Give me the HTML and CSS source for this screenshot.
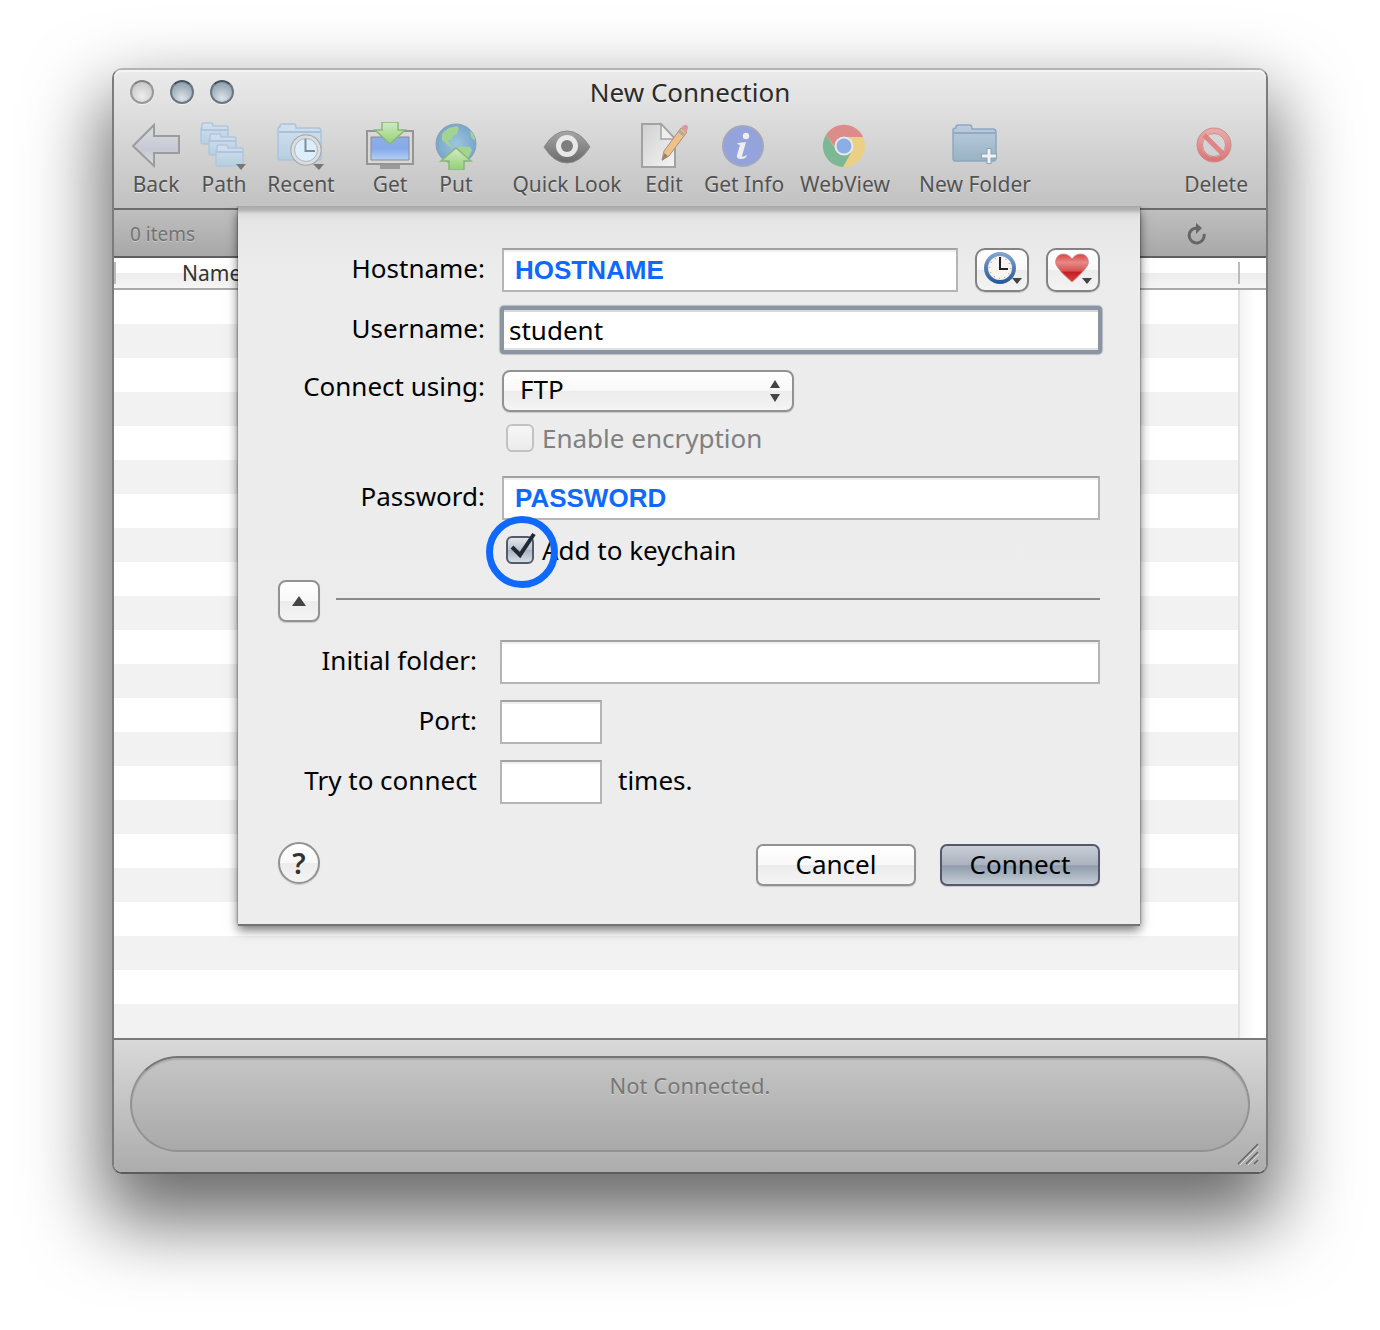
FILE: index.html
```html
<!DOCTYPE html>
<html lang="en">
<head>
<meta charset="utf-8">
<title>New Connection</title>
<link rel="stylesheet" href="styles.css">
</head>
<body>
<svg class="defs" width="0" height="0" aria-hidden="true">
  <defs>
    <linearGradient id="folder" x1="0" y1="0" x2="0" y2="1"><stop offset="0" stop-color="#d3e0ee"/><stop offset="1" stop-color="#b5cfdf"/></linearGradient>
    <linearGradient id="folderDark" x1="0" y1="0" x2="0" y2="1"><stop offset="0" stop-color="#bccddd"/><stop offset="1" stop-color="#98b2c4"/></linearGradient>
    <linearGradient id="arrow" x1="0" y1="0" x2="0" y2="1"><stop offset="0" stop-color="#dcdce2"/><stop offset=".6" stop-color="#c6c9d3"/><stop offset="1" stop-color="#dadbe0"/></linearGradient>
    <linearGradient id="green" x1="0" y1="0" x2="0" y2="1"><stop offset="0" stop-color="#d2ecc0"/><stop offset="1" stop-color="#94cf77"/></linearGradient>
    <linearGradient id="screen" x1="0" y1="0" x2="0" y2="1"><stop offset="0" stop-color="#8daee6"/><stop offset=".5" stop-color="#86aaea"/><stop offset="1" stop-color="#b3d0f4"/></linearGradient>
    <linearGradient id="eye" x1="0" y1="0" x2="0" y2="1"><stop offset="0" stop-color="#a6a6a6"/><stop offset="1" stop-color="#6a6a6a"/></linearGradient>
    <linearGradient id="heart" x1="0" y1="0" x2="0" y2="1"><stop offset="0" stop-color="#d9423f"/><stop offset=".3" stop-color="#e58a88"/><stop offset=".6" stop-color="#d8524f"/><stop offset=".65" stop-color="#c01f22"/><stop offset="1" stop-color="#d44"/></linearGradient>
    <linearGradient id="red" x1="0" y1="0" x2="0" y2="1"><stop offset="0" stop-color="#e9a9a9"/><stop offset="1" stop-color="#dc7676"/></linearGradient>
    <linearGradient id="clock" x1="0" y1="0" x2="0" y2="1"><stop offset="0" stop-color="#7fa2d0"/><stop offset="1" stop-color="#2c5a9a"/></linearGradient>
    <radialGradient id="globe"><stop offset="0" stop-color="#9dc5dc"/><stop offset="1" stop-color="#79a6cb"/></radialGradient>
    <linearGradient id="page" x1="0" y1="0" x2="1" y2="1"><stop offset="0" stop-color="#d0d0d0"/><stop offset="1" stop-color="#f4f4f4"/></linearGradient>
  </defs>
</svg>

<main class="window">
  <header class="chrome">
    <div class="titlebar">
      <div class="lights">
        <button class="light light-off" aria-label="Close"></button>
        <button class="light" aria-label="Minimize"></button>
        <button class="light" aria-label="Zoom"></button>
      </div>
      <h1 class="title">New Connection</h1>
    </div>
    <nav class="toolbar">
      <div class="group group-nav">
        <button class="tool">
          <svg class="icon" viewBox="0 0 48 48"><path d="M1 24 22 3v11h25v17H22v13z" fill="url(#arrow)" stroke="#9c9c9e" stroke-width="2"/></svg>
          Back</button>
        <button class="tool">
          <svg class="icon" viewBox="0 0 48 48">
            <g id="mini"><path d="M1 20V7q0-1 1-1V3q0-2 2-2h7q2 0 2 3h13q2 0 2 2v14q0 2-2 2H3q-2 0-2-2z" fill="url(#folder)" stroke="#b0c6de" stroke-width="1.5"/><path d="M1 8h27" stroke="#b0c4de" stroke-width="2"/></g>
            <use href="#mini" x="8" y="11"/><use href="#mini" x="15" y="22"/>
            <path d="M36 42h10l-5 6z" fill="#777"/></svg>
          Path</button>
        <button class="tool">
          <svg class="icon" viewBox="0 0 48 48">
            <path d="M1 36V7q0-2 2-2V4q0-2 2-2h12q2 0 2 4h22q3 0 3 3v27q0 2-2 2H3q-2 0-2-2z" fill="url(#folder)" stroke="#acc3db" stroke-width="1.5"/><path d="M2 10h41" stroke="#a9bfdb" stroke-width="2"/>
            <circle cx="29" cy="28" r="15" fill="#dfeaf2" stroke="#a8acb0" stroke-width="1.5"/><circle cx="29" cy="28" r="13" fill="#dceefa" stroke="#ddd" stroke-width="3"/><circle cx="29" cy="28" r="11.500" fill="none" stroke="#a9b6c2"/>
            <path d="M28.500 17v12H38" fill="none" stroke="#7f8c97" stroke-width="2"/><path d="M36 42h11l-5 6z" fill="#777"/></svg>
          Recent</button>
      </div>
      <div class="group group-transfer">
        <button class="tool">
          <svg class="icon" viewBox="0 0 48 48"><path d="M14 43h20v4H14z" fill="#9b9b9b"/><path d="M1 9h46v33H1z" fill="#d8d8d8" stroke="#959595" stroke-width="2"/><path d="M5 15h38v23H5z" fill="url(#screen)" stroke="#8a8a90"/><path d="M16 0h16v8h7L24 22 9 8h7z" fill="url(#green)" stroke="#8ab67a" stroke-width="1.500"/></svg>
          Get</button>
        <button class="tool">
          <svg class="icon" viewBox="0 0 48 48"><circle cx="24" cy="22" r="20" fill="url(#globe)" stroke="#85a0b9"/><path d="M10 12q5-7 15-8l2 2-2 6-4 2-2 4h-3l2 5 4 3-5-2-7-6zM26 24l12 1 2 3-3 7-6 2-4-6zM38 8q5 5 5 11l-4-4z" fill="#a2d393"/><path d="M24 26l15 13h-7v9H17v-9h-8z" fill="url(#green)" stroke="#8bb879" stroke-width="1.500"/></svg>
          Put</button>
      </div>
      <div class="group group-view">
        <button class="tool">
          <svg class="icon" viewBox="0 0 48 48"><path d="M1 25Q11 9 24 9t23 16Q37 41 24 41T1 25z" fill="url(#eye)" stroke="#8b8b8b"/><circle cx="24" cy="24" r="11" fill="#e8e8e8"/><circle cx="24" cy="24" r="6" fill="#7e7e7e"/></svg>
          Quick Look</button>
        <button class="tool">
          <svg class="icon" viewBox="0 0 48 48"><path d="M2 2h19l14 15v28H2z" fill="url(#page)" stroke="#a2a2a2" stroke-width="2"/><path d="M21 2v15h14z" fill="#eee" stroke="#a2a2a2" stroke-width="1.500"/><path d="M22 38l2-9L41 6l6 4-18 24z" fill="#edc08c" stroke="#b09070"/><path d="M41 6l3-3q4-1 4 3l-2 5z" fill="#d99b9b"/><path d="M39 9l5 4" stroke="#aaa" stroke-width="3"/><path d="M22 39l2-8 4 3z" fill="#9c8274"/></svg>
          Edit</button>
        <button class="tool">
          <svg class="icon" viewBox="0 0 48 48"><circle cx="23" cy="24" r="20" fill="#94a3db" stroke="#a2a8bd" stroke-width="2"/><circle cx="26" cy="14" r="3.200" fill="#eee"/><path d="M18 21l8-1-4 14q0 2 5-1-1 4-6 4-5 0-4-4l3-10-3-1z" fill="#eee"/></svg>
          Get Info</button>
        <button class="tool">
          <svg class="icon" viewBox="0 0 48 48"><circle cx="23" cy="24" r="21" fill="#ebd083"/><path d="M5 13a21 21 0 0 1 36 0l1 2H23l-9 10z" fill="#dc8d8b"/><path d="M5 13a21 21 0 0 0 17 32l9-16-8 3-9-6z" fill="#7db894"/><circle cx="23" cy="24" r="9.500" fill="#e6e8ee"/><circle cx="23" cy="24" r="7.500" fill="#8caee4"/></svg>
          WebView</button>
        <button class="tool">
          <svg class="icon" viewBox="0 0 48 48"><path d="M2 36V8q0-2 3-2V5q0-2 2-2h12q2 0 2 4h21q3 0 3 3v26q0 3-3 3H4q-2 0-2-3z" fill="url(#folderDark)" stroke="#8fa6c0" stroke-width="1.500"/><path d="M3 11h41" stroke="#93a9c6" stroke-width="2"/><path d="M38 26v16M30 34h16" stroke="#8aa2b6" stroke-width="5"/><path d="M38 27v14M31 34h14" stroke="#f2f2f2" stroke-width="3"/></svg>
          New Folder</button>
      </div>
      <button class="tool tool-end">
        <svg class="icon" viewBox="0 0 48 48"><circle cx="22" cy="23" r="14.500" fill="none" stroke="url(#red)" stroke-width="5"/><path d="M12 13l20 20" stroke="#de8585" stroke-width="5"/><circle cx="22" cy="23" r="17" fill="none" stroke="#cc8a8a"/><circle cx="22" cy="23" r="11.500" fill="none" stroke="#cf8686"/></svg>
        Delete</button>
    </nav>
  </header>

  <div class="statusbar">
    <span>0 items</span>
    <button class="refresh" aria-label="Refresh"><svg viewBox="0 0 20 22"><path d="M18 11a7.500 7.500 0 1 1-7-6" fill="none" stroke="#666" stroke-width="3"/><path d="M10 0l6 5-6 6z" fill="#666"/></svg></button>
  </div>
  <div class="columns"><span class="col-name">Name</span></div>
  <div class="files"><div class="scroll"></div></div>

  <footer class="footer">
    <div class="pill">Not Connected.</div>
    <svg class="grip" viewBox="0 0 22 22"><path d="M1 21 21 1M9 21 21 9M17 21l4-4" stroke="#666" stroke-width="1.500"/><path d="M3 22 22 3M11 22 22 11" stroke="#ddd"/></svg>
  </footer>

  <form class="sheet">
    <div class="row">
      <label for="host">Hostname:</label>
      <div class="host">
        <input class="field marked" id="host" type="text" value="HOSTNAME">
        <button class="pick" type="button" aria-label="Recent hosts"><svg viewBox="0 0 54 44"><circle cx="25" cy="20" r="14" fill="#f8f4f0" stroke="url(#clock)" stroke-width="4"/><circle cx="25" cy="20" r="10.500" fill="none" stroke="#b8b0a8" stroke-width="1.500" stroke-dasharray="1 4.500"/><path d="M25 9v12h8" fill="none" stroke="#222" stroke-width="2"/><path d="M37 30h10l-5 6z" fill="#444"/></svg></button>
        <button class="pick" type="button" aria-label="Favorites"><svg viewBox="0 0 54 44"><path d="M26 34Q12 22 10 16C8 5 21 3 26 11 31 3 44 5 42 16 40 22 26 34 26 34z" fill="url(#heart)" stroke="#d87a7a"/><path d="M36 30h10l-5 6z" fill="#444"/></svg></button>
      </div>
    </div>
    <div class="row">
      <label for="user">Username:</label>
      <input class="field focused" id="user" type="text" value="student">
    </div>
    <div class="row row-select">
      <label for="proto">Connect using:</label>
      <div class="select">
        <select id="proto"><option>FTP</option></select>
        <svg class="updown" viewBox="0 0 10 22"><path d="M0 8l5-8 5 8zM0 14l5 8 5-8z" fill="#444"/></svg>
      </div>
    </div>
    <div class="check disabled">
      <input type="checkbox" id="enc" disabled><label for="enc">Enable encryption</label>
    </div>
    <div class="row">
      <label for="pass">Password:</label>
      <input class="field marked" id="pass" type="text" value="PASSWORD">
    </div>
    <div class="check">
      <input type="checkbox" id="keychain" checked><label for="keychain">Add to keychain</label>
      <svg class="tick" viewBox="0 0 30 32"><path d="M6 16l8 8L28 3" fill="none" stroke="#1f2a36" stroke-width="4"/></svg>
      <span class="ring"></span>
    </div>
    <div class="divider">
      <button class="disclose" type="button" aria-label="Fewer options"><svg viewBox="0 0 14 10"><path d="M0 10 7 0l7 10z" fill="#444"/></svg></button>
      <hr>
    </div>
    <div class="row extra"><label for="folder-path">Initial folder:</label><input class="field" id="folder-path" type="text"></div>
    <div class="row extra"><label for="port">Port:</label><input class="field short" id="port" type="text"></div>
    <div class="row extra"><label for="tries">Try to connect</label><div class="tries"><input class="field short" id="tries" type="text"><span>times.</span></div></div>
    <div class="actions">
      <button class="help" type="button" aria-label="Help">?</button>
      <button class="btn" type="button">Cancel</button>
      <button class="btn primary" type="submit">Connect</button>
    </div>
  </form>
</main>
</body>
</html>
```
FILE: styles.css
```css
* { box-sizing: border-box; }
body {
  margin: 0;
  padding: 68px 112px 156px;
  background: #fff;
  color: #000;
  font: 26px/32px "Noto Sans", "Open Sans", sans-serif;
}
button, input, select { font: inherit; color: inherit; margin: 0; padding: 0; }
button { border: 0; background: none; }
svg { display: block; }
.defs { position: absolute; }

.window {
  position: relative;
  border: 2px solid #7c7c7c;
  border-top-color: #b4b4b4;
  border-bottom-color: #5c5c5c;
  border-radius: 10px;
  background: #fff;
  background-clip: padding-box;
  box-shadow: 0 38px 76px 10px rgba(0, 0, 0, .58);
}

.chrome {
  height: 140px;
  border-bottom: 2px solid #6a6a6a;
  border-radius: 8px 8px 0 0;
  background: linear-gradient(#ebebeb, #c1c1c1);
  box-shadow: inset 0 2px 0 #f4f4f4;
}
.titlebar {
  display: grid;
  grid-template-columns: 1fr auto 1fr;
  align-items: center;
  height: 46px;
  padding: 0 16px 2px;
}
.lights { display: flex; gap: 16px; }
.light {
  width: 24px;
  height: 24px;
  border: 2px solid #6b7681;
  border-top-color: #47525c;
  border-radius: 50%;
  background: radial-gradient(circle at 50% 80%, #dce4ea, #a3b2be 60%, #7f909e);
  box-shadow: 0 1px 1px #f2f2f2;
}
.light-off {
  border-color: #999;
  border-top-color: #808080;
  background: radial-gradient(circle at 50% 70%, #eee, #ccc 70%);
}
.title { margin: 0; font-size: 26px; font-weight: 400; color: #2b2b2b; text-shadow: 0 1px 0 #f4f4f4; }

.toolbar { display: flex; gap: 16px; padding: 6px 18px 0 10px; }
.group { display: grid; }
.group-nav { grid-template-columns: 64px 72px 82px; }
.group-transfer { grid-template-columns: 64px 68px; }
.group-view { grid-template-columns: 122px 72px 88px 114px 146px; }
.tool {
  display: flex;
  flex-direction: column;
  align-items: center;
  font-size: 21px;
  line-height: 28px;
  color: #525252;
  white-space: nowrap;
  text-shadow: 0 1px 0 #e4e4e4;
}
.icon { width: 48px; height: 48px; }
.tool-end { margin-left: auto; }

.statusbar {
  display: flex;
  justify-content: space-between;
  align-items: center;
  height: 48px;
  padding: 2px 60px 0 16px;
  border-bottom: 2px solid #5e5e5e;
  background: linear-gradient(#bfbfbf, #a8a8a8);
  font-size: 19px;
  color: #737373;
  text-shadow: 0 1px 0 #ccc;
}
.refresh svg { width: 20px; height: 22px; }

.columns {
  display: flex;
  align-items: center;
  height: 32px;
  padding-left: 68px;
  border-bottom: 2px solid #aaa;
  background:
    linear-gradient(#bbb, #bbb) 0 50% / 2px 22px no-repeat,
    linear-gradient(#bbb, #bbb) calc(100% - 26px) 50% / 2px 22px no-repeat,
    linear-gradient(#fff 50%, #ececec 50%, #f6f6f6);
  font-size: 21px;
  color: #333;
}
.files {
  display: flex;
  justify-content: flex-end;
  height: 748px;
  background: repeating-linear-gradient(#fff 0 34px, #f2f2f2 34px 68px);
}
.scroll {
  width: 28px;
  border-left: 2px solid #e2e2e2;
  background: linear-gradient(90deg, #f4f4f4, #fff 60%);
}

.footer {
  position: relative;
  padding: 16px 16px 20px;
  border-top: 2px solid #7a7a7a;
  border-radius: 0 0 8px 8px;
  background: linear-gradient(#d9d9d9, #acacac);
}
.pill {
  height: 96px;
  padding-top: 11px;
  border: 2px solid #929292;
  border-top-color: #747474;
  border-radius: 48px;
  background: linear-gradient(#c5c5c5, #a9a9a9);
  background-clip: padding-box;
  box-shadow: inset 0 2px 1px rgba(0, 0, 0, .12);
  font-size: 22px;
  text-align: center;
  color: #777;
  text-shadow: 0 1px 0 #d4d4d4;
}
.grip { position: absolute; right: 7px; bottom: 7px; width: 22px; height: 22px; }

/* The sheet drops down from the toolbar over the file list. */
.sheet {
  position: absolute;
  top: 136px;
  left: 124px;
  right: 126px;
  padding: 42px 40px 38px;
  background:
    linear-gradient(#a8a8a8, #b6b6b6 4px, rgba(215, 215, 215, .6) 8px, rgba(228, 228, 228, 0) 14px),
    linear-gradient(#e4e4e4, #ececec 64px, #ededed);
  box-shadow: 0 2px 0 #747474, 0 6px 10px rgba(0, 0, 0, .55), 0 0 2px rgba(0, 0, 0, .6);
  clip-path: inset(0 -20px -24px -20px);
}
.row {
  display: grid;
  grid-template-columns: 207px 1fr;
  column-gap: 17px;
  align-items: center;
  margin-bottom: 16px;
}
.row > label { padding-bottom: 4px; text-align: right; white-space: nowrap; }
.field {
  width: 100%;
  min-width: 0;
  height: 44px;
  padding: 0 5px;
  border: 2px solid #b5b5b5;
  border-top-color: #a2a2a2;
  background: #fff;
  box-shadow: inset 0 2px 0 #f0f0f0;
  outline: 0;
}
.marked { padding: 0 11px; font: bold 26px "Liberation Sans", Arial, sans-serif; color: #1069ff; }
.focused {
  border-color: #8a95a1;
  border-radius: 2px;
  box-shadow: 0 0 0 2px #8a95a1, 0 0 1px 3px #b6bdc5, inset 0 2px 0 #d5d9de, inset 0 -2px 0 #dde1e4;
}
.host { display: flex; gap: 17px; }
.host .field { flex: 1; }
.pick, .btn, .disclose, .help, select {
  border: 2px solid #929292;
  border-radius: 8px;
  background: linear-gradient(#fff, #f8f8f8 50%, #ececec 50%, #f4f4f4);
  box-shadow: 0 1px 1px rgba(0, 0, 0, .15);
}
.pick { width: 54px; height: 44px; border-color: #838383; border-radius: 10px; }
.pick svg { width: 54px; height: 44px; margin: -2px; }
.row-select { margin: 18px 0 12px; }
.row-select > label { padding-bottom: 10px; }
.select { position: relative; width: 292px; }
select {
  display: block;
  width: 100%;
  height: 42px;
  padding: 0 16px 4px;
  appearance: none;
}
.updown { position: absolute; top: 10px; right: 14px; width: 10px; height: 22px; }

.check {
  position: relative;
  display: flex;
  align-items: center;
  gap: 8px;
  height: 28px;
  margin: 0 0 16px 228px;
}
.check input {
  width: 28px;
  height: 28px;
  appearance: none;
  border: 2px solid #535c69;
  border-radius: 6px;
  background: linear-gradient(#e2e6ea, #b9c2cc 50%, #a8b3bf 50%, #d6dde3);
}
.disabled { margin-bottom: 24px; color: #808080; }
.disabled input { border-color: #c2c2c2; background: linear-gradient(#f6f6f6, #ececec); }
.tick { position: absolute; left: 0; top: -5px; width: 30px; height: 32px; pointer-events: none; }
.ring {
  position: absolute;
  left: -20px;
  top: -20px;
  width: 72px;
  height: 72px;
  border: 7px solid #1069ff;
  border-radius: 50%;
  pointer-events: none;
}

.divider { display: flex; gap: 16px; margin-bottom: 18px; }
.divider hr { flex: 1; height: 2px; margin: 18px 0 0; border: 0; background: #8a8a8a; }
.disclose { width: 42px; height: 42px; padding: 0 12px; }
.disclose svg { width: 14px; height: 10px; }
.extra { grid-template-columns: 199px 1fr; column-gap: 23px; }
.short { width: 102px; }
.tries { display: flex; align-items: center; gap: 16px; }
.tries span { padding-bottom: 4px; }

.actions { display: flex; align-items: flex-end; gap: 24px; height: 66px; }
.help {
  width: 42px;
  height: 42px;
  margin: 0 auto 2px 0;
  border-radius: 50%;
  font-size: 29px;
  font-weight: 600;
  color: #333;
}
.btn { width: 160px; height: 42px; padding-bottom: 2px; border-radius: 7px; }
.primary {
  border-color: #55586c;
  background: linear-gradient(#c9ced6, #a9b2be 50%, #909cac 52%, #c4cdd6);
}
```
